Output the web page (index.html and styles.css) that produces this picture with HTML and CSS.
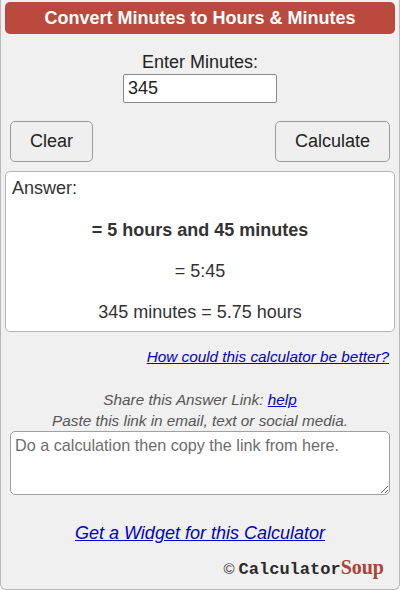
FILE: index.html
```html
<!DOCTYPE html>
<html>
<head>
    <meta charset="UTF-8">
    <meta name="viewport" content="width=device-width, initial-scale=1.0">
    <title>Convert Minutes to Hours &amp; Minutes</title>
    <link rel="stylesheet" href="styles.css">
</head>
<body>
    <div class="calc">
        <h1 class="calc-title">Convert Minutes to Hours &amp; Minutes</h1>

        <!-- Input for minutes -->
        <div class="entry">
            <label for="minutes">Enter Minutes:</label>
            <input type="text" id="minutes" value="345">
        </div>

        <div class="buttons">
            <button class="btn">Clear</button>
            <button class="btn">Calculate</button>
        </div>

        <!-- Answer box -->
        <div class="answer">
            <div class="answer-label">Answer:</div>
            <p class="answer-main">= 5 hours and 45 minutes</p>
            <p class="answer-line">= 5:45</p>
            <p class="answer-line">345 minutes = 5.75 hours</p>
        </div>

        <div class="feedback"><a href="#">How could this calculator be better?</a></div>

        <div class="share">
            <div>Share this Answer Link: <a href="#">help</a></div>
            <div>Paste this link in email, text or social media.</div>
        </div>
        <textarea class="share-box" placeholder="Do a calculation then copy the link from here."></textarea>

        <div class="widget"><a href="#">Get a Widget for this Calculator</a></div>

        <div class="brand">
            <span class="copy">&copy;</span><span class="brand-calc">Calculator</span><span class="brand-soup">Soup</span>
        </div>
    </div>
</body>
</html>
```

FILE: styles.css
```css
body {
    margin: 0;
    font-family: 'Liberation Sans', Arial, sans-serif;
    color: #222;
    background: #ffffff;
}

.calc {
    box-sizing: border-box;
    width: 400px;
    height: 590px;
    background-color: #f0f0f0;
    border: 1px solid #b8b8b8;
    border-top: none;
    border-radius: 0 0 6px 6px;
    padding: 2px 4px 0 4px;
    display: flex;
    flex-direction: column;
}

.calc-title {
    margin: 0;
    height: 32px;
    line-height: 32px;
    background-color: #b94a3d;
    border-radius: 5px;
    color: #ffffff;
    font-size: 18px;
    font-weight: bold;
    text-align: center;
}

.entry {
    display: flex;
    flex-direction: column;
    align-items: center;
    margin-top: 18px;
    font-size: 18px;
}

.entry label {
    line-height: 21px;
}

.entry input {
    box-sizing: border-box;
    margin-top: 1px;
    width: 154px;
    height: 29px;
    padding: 0 4px;
    font-family: 'Liberation Sans', Arial, sans-serif;
    font-size: 18px;
    color: #222;
    border: 1px solid #8a8a8a;
    border-radius: 2px;
    background: #fff;
}

.buttons {
    display: flex;
    justify-content: space-between;
    padding: 0 5px;
    margin-top: 18px;
}

.btn {
    height: 41px;
    padding: 0 19px;
    font-family: 'Liberation Sans', Arial, sans-serif;
    font-size: 18px;
    color: #222;
    background-color: #efefef;
    border: 1px solid #9a9a9a;
    border-radius: 5px;
}

.answer {
    box-sizing: border-box;
    margin-top: 9px;
    height: 161px;
    background: #ffffff;
    border: 1px solid #b4b4b4;
    border-radius: 5px;
    padding: 6px 6px 0 6px;
    font-size: 18px;
    color: #333;
}

.answer-label {
    line-height: 20px;
}

.answer p {
    margin: 0;
    text-align: center;
    line-height: 20px;
}

.answer-main {
    padding-top: 22px;
    font-weight: bold;
}

.answer-line {
    padding-top: 21px;
}

.feedback {
    margin-top: 16px;
    text-align: right;
    padding-right: 6px;
    font-size: 15.3px;
    font-style: italic;
    line-height: 18px;
}

a {
    color: #0000cc;
}

.share {
    margin-top: 23px;
    text-align: center;
    font-size: 15.3px;
    font-style: italic;
    color: #555;
    line-height: 21px;
}

.share-box {
    box-sizing: border-box;
    display: block;
    margin: 0 5px;
    height: 64px;
    padding: 4px;
    font-family: 'Liberation Sans', Arial, sans-serif;
    font-size: 16.2px;
    border: 1px solid #a0a0a0;
    border-radius: 5px;
    background: #fff;
    resize: vertical;
}

.share-box::placeholder {
    color: #6d6d6d;
}

.widget {
    margin-top: 28px;
    text-align: center;
    font-size: 18px;
    font-style: italic;
    line-height: 20px;
}

.brand {
    margin-top: 14px;
    text-align: right;
    padding-right: 11px;
    line-height: 20px;
}

.copy {
    font-size: 15px;
    color: #333;
    margin-right: 4px;
}

.brand-calc {
    font-family: 'Liberation Mono', 'Courier New', monospace;
    font-weight: bold;
    font-size: 17px;
    color: #2a2a2a;
}

.brand-soup {
    font-family: 'Liberation Serif', 'Times New Roman', serif;
    font-weight: bold;
    font-size: 20px;
    color: #a94436;
}
```
